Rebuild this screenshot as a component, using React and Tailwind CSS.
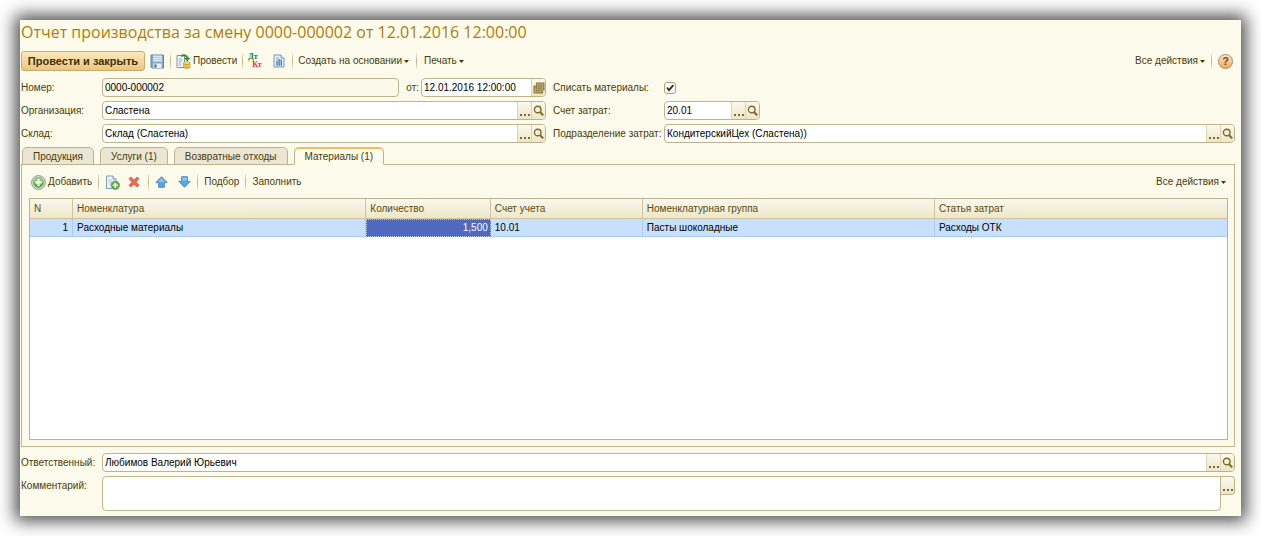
import { useState } from "react";

const TABS = ["Продукция", "Услуги (1)", "Возвратные отходы", "Материалы (1)"];

const COLUMNS = [
  { title: "N", width: "w-[3.6%]" },
  { title: "Номенклатура", width: "w-[24.5%]" },
  { title: "Количество", width: "w-[10.4%]" },
  { title: "Счет учета", width: "w-[12.7%]" },
  { title: "Номенклатурная группа", width: "w-[24.4%]" },
  { title: "Статья затрат", width: "w-[24.4%]" },
];

const ROWS = [
  {
    n: 1,
    item: "Расходные материалы",
    count: "1,500",
    account: "10.01",
    group: "Пасты шоколадные",
    cost: "Расходы ОТК",
  },
];

const SearchIcon = () => (
  <svg width="12" height="12" viewBox="0 0 12 12" fill="none" stroke="#7d692c">
    <circle cx="4.7" cy="4.5" r="3.3" strokeWidth="1.4" />
    <path d="M7.2 7.2 L10.2 10.4" strokeWidth="2" />
  </svg>
);

const CalendarIcon = () => (
  <svg width="12" height="12" viewBox="0 0 12 12">
    <path d="M3 0.5h8.5v8h-1.5v3h-9.5v-8h2.5z" fill="#8a7637" />
    <path
      d="M3.5 2.7h7.5M3.5 5h7.5M1 7.2h9.5M1 9.4h8.5M4.8 1v10M7.2 1v10M9.5 1v8M2.4 4v7"
      stroke="#d8cd9c"
      strokeWidth="0.5"
    />
  </svg>
);

const SaveIcon = () => (
  <svg width="15" height="15" viewBox="0 0 15 15">
    <path d="M1 1h12.5v13H2L1 13z" fill="#86abc9" stroke="#6388a5" />
    <rect x="3" y="1.5" width="9" height="6" fill="#dceaf5" />
    <path d="M3 3.5h9M3 5.5h9" stroke="#b3cde2" />
    <rect x="3.5" y="9.5" width="8" height="4.5" fill="#e9f0f5" />
    <rect x="4.5" y="10.5" width="2" height="3" fill="#3f617c" />
  </svg>
);

const PostIcon = () => (
  <svg width="15" height="15" viewBox="0 0 15 15">
    <path d="M1 1.5h7.5v12H1z" fill="#fff" stroke="#7896ab" />
    <path d="M2.5 5h4M2.5 7h4M2.5 9h3M2.5 11h3" stroke="#87a9c4" />
    <path d="M5 2.2c3-1.8 6-1 6.3 2" fill="none" stroke="#2c9333" strokeWidth="2" />
    <path d="M8 3.8h6.5l-3.2 3.7z" fill="#2c9333" />
    <path d="M7.5 9v4.3c0 1.5 6.5 1.5 6.5 0V9z" fill="#e5ac35" stroke="#bf8723" strokeWidth="0.6" />
    <ellipse cx="10.75" cy="9" rx="3.25" ry="1.3" fill="#fbe28e" stroke="#bf8723" strokeWidth="0.6" />
    <path d="M7.5 11.2c0 1.4 6.5 1.4 6.5 0" fill="none" stroke="#fbe28e" strokeWidth="0.7" />
  </svg>
);

const ReportIcon = () => (
  <svg width="12" height="14" viewBox="0 0 12 14">
    <path d="M1 1h7l3 3v9H1z" fill="#e6f1fa" stroke="#739abc" />
    <path d="M8 1v3h3" fill="#fff" stroke="#739abc" />
    <path d="M3 4h3M3 6h6M3 8h6M3 10h6" stroke="#6c94b7" strokeWidth="0.8" />
    <path d="M4 7v5M6.2 5v7M8.4 6v6" stroke="#4f7ea8" strokeWidth="1.1" />
  </svg>
);

const AddIcon = () => (
  <svg width="15" height="15" viewBox="0 0 15 15">
    <circle cx="7.5" cy="7.5" r="6.9" fill="#dfe5d8" stroke="#8b9685" />
    <circle cx="7.5" cy="7.5" r="5.4" fill="#62ad4e" />
    <path d="M2.5 7a5 5 0 0 1 10 0z" fill="#8fca7c" />
    <path d="M7.5 4v7M4 7.5h7" stroke="#fff" strokeWidth="2" />
  </svg>
);

const CopyIcon = () => (
  <svg width="15" height="15" viewBox="0 0 15 15">
    <path d="M1.5 1h6.5l3 3v9.5H1.5z" fill="#eef4f9" stroke="#7f9db5" />
    <path d="M8 1v3h3" fill="#fff" stroke="#7f9db5" />
    <path d="M3.5 5h4M3.5 7h4M3.5 9h2" stroke="#b3c9da" />
    <circle cx="10.3" cy="10.3" r="4.2" fill="#62ad4e" stroke="#719366" strokeWidth="0.8" />
    <path d="M10.3 7.8v5M7.8 10.3h5" stroke="#fff" strokeWidth="1.6" />
  </svg>
);

const DeleteIcon = () => (
  <svg width="12" height="12" viewBox="0 0 12 12">
    <path
      d="M1 2.8L2.8 1 6 4.1 9.2 1 11 2.8 7.9 6 11 9.2 9.2 11 6 7.9 2.8 11 1 9.2 4.1 6z"
      fill="#ef6a58"
      stroke="#e0503d"
      strokeWidth="0.8"
    />
  </svg>
);

const UpIcon = () => (
  <svg width="13" height="12" viewBox="0 0 13 12">
    <path d="M6.5 0.7L12.2 6.6H9.4V11.3H3.6V6.6H0.8z" fill="#5aa7e0" stroke="#4c87b8" strokeWidth="0.9" />
    <path d="M6.5 2.2L9.8 5.7H3.2z" fill="#8fcaf2" />
  </svg>
);

const DownIcon = () => (
  <svg width="13" height="12" viewBox="0 0 13 12">
    <path d="M6.5 11.3L12.2 5.4H9.4V0.7H3.6V5.4H0.8z" fill="#5aa7e0" stroke="#4c87b8" strokeWidth="0.9" />
    <path d="M4.4 1.5h4.2v3H4.4z" fill="#8fcaf2" />
  </svg>
);

const HelpIcon = () => (
  <span className="flex size-[15px] items-center justify-center rounded-full border border-[#a08a6c] bg-linear-to-b from-[#fde6c6] to-[#f4a95a] text-[11px] leading-none font-bold text-[#6b4a24]">
    ?
  </span>
);

const Caret = () => (
  <svg width="5" height="3" viewBox="0 0 5 3">
    <path d="M0 0h5L2.5 3z" fill="#443605" />
  </svg>
);

const Divider = () => (
  <span className="h-4 w-px bg-linear-to-b from-[#eeead2] via-[#b9b18b] to-[#eeead2]" />
);

const ToolButton = ({ children, label, className = "" }) => (
  <button
    type="button"
    aria-label={label}
    className={`flex h-5 items-center gap-0.5 whitespace-nowrap ${className}`}
  >
    {children}
  </button>
);

const SideButton = ({ children, label, className = "border-l border-[#ddd6b4]" }) => (
  <button
    type="button"
    aria-label={label}
    className={`flex w-3.5 shrink-0 items-center justify-center bg-linear-to-b from-[#fbf9ec] to-[#ece6c8] ${className}`}
  >
    {children}
  </button>
);

const Dots = () => (
  <svg width="10" height="14" viewBox="0 0 10 14" fill="#7d692c">
    <path d="M0 10h2v2H0zM4 10h2v2H4zM8 10h2v2H8z" />
  </svg>
);

const Field = ({ id, value, readOnly, picker = "search", className = "" }) => (
  <div
    className={`flex h-[19px] min-w-0 overflow-hidden rounded-[4px] border border-[#bdb48c] ${
      readOnly ? "bg-[#fbf9ea]" : "bg-white"
    } ${className}`}
  >
    <input
      id={id}
      defaultValue={value}
      readOnly={readOnly}
      className="w-full min-w-0 flex-1 bg-transparent px-0.5 text-black outline-none"
    />
    {picker === "search" && (
      <>
        <SideButton label="Выбрать">
          <Dots />
        </SideButton>
        <SideButton label="Открыть">
          <SearchIcon />
        </SideButton>
      </>
    )}
    {picker === "calendar" && (
      <SideButton label="Календарь">
        <CalendarIcon />
      </SideButton>
    )}
  </div>
);

const Label = ({ htmlFor, children }) => (
  <label htmlFor={htmlFor} className="leading-[19px] whitespace-nowrap">
    {children}
  </label>
);

const MainToolbar = () => (
  <div className="flex h-5 items-center gap-[5px]">
    <button
      type="button"
      className="h-5 w-[124px] rounded-[3px] border border-[#c9ac6b] bg-linear-to-b from-[#fbe9bd] to-[#e9c67e] text-[11px] font-bold whitespace-nowrap text-[#3d2f04]"
    >
      Провести и закрыть
    </button>
    <ToolButton label="Записать">
      <SaveIcon />
    </ToolButton>
    <Divider />
    <ToolButton>
      <PostIcon />
      Провести
    </ToolButton>
    <Divider />
    <ToolButton label="Дт Кт" className="w-5">
      <span className="font-['Liberation_Serif',serif] text-[8px] leading-[8px] font-bold">
        <span className="block text-left text-[#157a1c]">Дт</span>
        <span className="block pl-1 text-left text-[#ef2b2b]">Кт</span>
      </span>
    </ToolButton>
    <ToolButton label="Отчет" className="pr-0.5">
      <ReportIcon />
    </ToolButton>
    <Divider />
    <ToolButton>
      Создать на основании
      <Caret />
    </ToolButton>
    <ToolButton className="gap-[7px] pl-0.5">
      <Divider />
      <span className="flex items-center gap-0.5">
        Печать
        <Caret />
      </span>
    </ToolButton>
    <div className="ml-auto flex items-center gap-1.5 pr-0.5">
      <ToolButton>
        Все действия
        <Caret />
      </ToolButton>
      <Divider />
      <ToolButton label="Справка">
        <HelpIcon />
      </ToolButton>
    </div>
  </div>
);

const TableToolbar = () => (
  <div className="flex h-5 items-center gap-1.5 px-0.5">
    <ToolButton>
      <AddIcon />
      Добавить
    </ToolButton>
    <Divider />
    <ToolButton label="Скопировать">
      <CopyIcon />
    </ToolButton>
    <ToolButton label="Удалить" className="px-0.5">
      <DeleteIcon />
    </ToolButton>
    <Divider />
    <ToolButton label="Вверх">
      <UpIcon />
    </ToolButton>
    <ToolButton label="Вниз" className="pl-1">
      <DownIcon />
    </ToolButton>
    <Divider />
    <ToolButton>Подбор</ToolButton>
    <Divider />
    <ToolButton>Заполнить</ToolButton>
    <ToolButton className="ml-auto">
      Все действия
      <Caret />
    </ToolButton>
  </div>
);

const cell = "truncate border-r border-b border-r-[#b3cbe2] border-b-[#a9cbee] px-1";

const MaterialsTable = () => (
  <div className="mt-1.5 flex-1 border border-[#bdb48c] bg-white">
    <table className="w-full table-fixed border-separate border-spacing-0 text-left">
      <thead>
        <tr className="h-5 bg-linear-to-b from-[#f9f8ee] to-[#eee6c7]">
          {COLUMNS.map((col) => (
            <th
              key={col.title}
              className={`truncate border-r border-b border-[#cdc49c] px-1 font-normal text-[#5c4a08] last:border-r-0 ${col.width}`}
            >
              {col.title}
            </th>
          ))}
        </tr>
      </thead>
      <tbody>
        {ROWS.map((row) => (
          <tr key={row.n} className="h-[18px] bg-[#c7e0ff] text-black">
            <td className={`${cell} text-right`}>{row.n}</td>
            <td className={cell}>{row.item}</td>
            <td className="border border-dotted border-[#b9c6f0] bg-[#5068c0] px-0.5 text-right text-white">
              {row.count}
            </td>
            <td className={cell}>{row.account}</td>
            <td className={cell}>{row.group}</td>
            <td className={`${cell} border-r-0`}>{row.cost}</td>
          </tr>
        ))}
      </tbody>
    </table>
  </div>
);

const App = () => {
  const [tab, setTab] = useState(3);
  const [writeOff, setWriteOff] = useState(true);

  return (
    <div className="flex min-h-screen flex-col bg-white p-5 font-['Liberation_Sans',sans-serif] text-[10px] leading-4 text-[#4a3c08]">
      <main className="flex flex-1 flex-col bg-[#fcfaeb] pr-1.5 pb-[5px] pl-px shadow-[0_0_16px_5px_rgba(0,0,0,0.7)]">
        <h1 className="mb-[7px] font-['Open_Sans',sans-serif] text-[16px] leading-6 whitespace-nowrap text-[#b07d06]">
          Отчет производства за смену 0000-000002 от 12.01.2016 12:00:00
        </h1>

        <MainToolbar />

        <div className="mt-[7px] grid grid-cols-[81px_minmax(0,444fr)_118px_minmax(0,571fr)] items-center gap-y-1">
          <Label htmlFor="number">Номер:</Label>
          <div className="flex items-center">
            <Field id="number" value="0000-000002" readOnly picker="none" className="flex-1" />
            <div className="flex w-[22px] justify-end pr-0.5">
              <Label htmlFor="date">от:</Label>
            </div>
            <Field id="date" value="12.01.2016 12:00:00" picker="calendar" className="w-[125px]" />
          </div>
          <div className="pl-[7px]">
            <Label htmlFor="writeoff">Списать материалы:</Label>
          </div>
          <div className="flex items-center">
            <input
              id="writeoff"
              type="checkbox"
              checked={writeOff}
              onChange={(e) => setWriteOff(e.target.checked)}
              className="peer size-3 appearance-none rounded-[3px] border border-[#a89e72] bg-white"
            />
            <svg
              viewBox="0 0 12 12"
              className="pointer-events-none invisible -ml-3 size-3 peer-checked:visible"
            >
              <path d="M3 5.5L5 8.2L9.3 3.2" fill="none" stroke="#3b3320" strokeWidth="1.9" />
            </svg>
          </div>

          <Label htmlFor="org">Организация:</Label>
          <Field id="org" value="Сластена" />
          <div className="pl-[7px]">
            <Label htmlFor="account">Счет затрат:</Label>
          </div>
          <Field id="account" value="20.01" className="w-24" />

          <Label htmlFor="store">Склад:</Label>
          <Field id="store" value="Склад (Сластена)" />
          <div className="pl-[7px]">
            <Label htmlFor="dept">Подразделение затрат:</Label>
          </div>
          <Field id="dept" value="КондитерскийЦех (Сластена))" />
        </div>

        <div role="tablist" className="relative z-10 mt-1 -mb-px flex gap-1.5 pl-px">
          {TABS.map((title, i) => (
            <button
              key={title}
              type="button"
              role="tab"
              aria-selected={tab === i}
              onClick={() => setTab(i)}
              className={`h-[18px] rounded-t-[5px] border border-[#bdb48c] px-2.5 leading-[15px] whitespace-nowrap ${
                tab === i
                  ? "border-t-2 border-t-[#eebf62] border-b-[#fcfaeb] bg-[#fcfaeb]"
                  : "bg-[#ebe6d3]"
              }`}
            >
              {title}
            </button>
          ))}
        </div>

        <section className="flex flex-1 flex-col border border-[#bdb48c] pt-[7px] pr-1.5 pb-1.5 pl-[7px]">
          <TableToolbar />
          <MaterialsTable />
        </section>

        <div className="mt-1.5 grid grid-cols-[81px_minmax(0,1fr)] gap-y-1">
          <Label htmlFor="responsible">Ответственный:</Label>
          <Field id="responsible" value="Любимов Валерий Юрьевич" />
          <Label htmlFor="comment">Комментарий:</Label>
          <div className="flex items-start">
            <textarea
              id="comment"
              className="h-[35px] min-w-0 flex-1 resize-none rounded-[4px] rounded-tr-none border border-[#bdb48c] bg-white px-0.5 outline-none"
            />
            <SideButton
              label="Выбрать"
              className="h-[19px] rounded-r-[4px] border-y border-r border-[#bdb48c]"
            >
              <Dots />
            </SideButton>
          </div>
        </div>
      </main>
    </div>
  );
};

export default App;
